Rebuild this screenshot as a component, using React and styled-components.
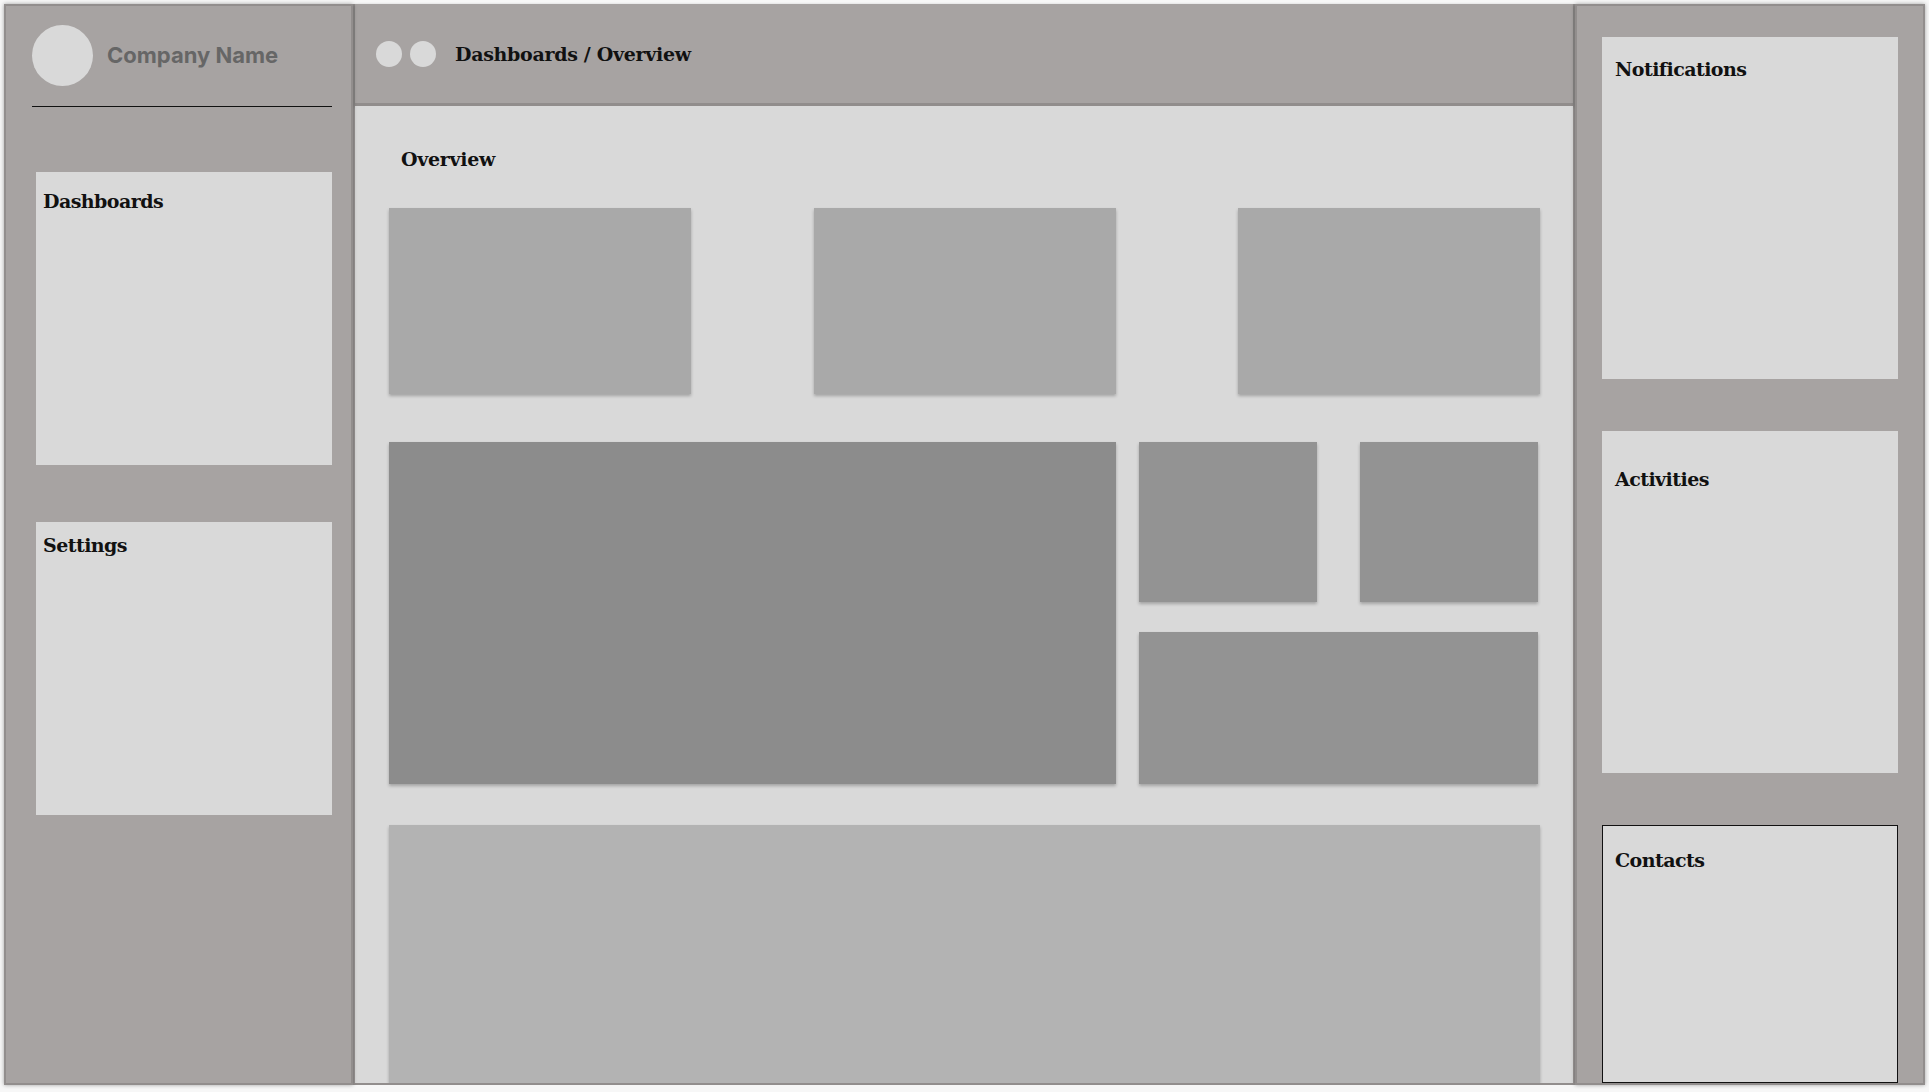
import React from 'react';
import styled, { createGlobalStyle } from 'styled-components';

// --- Global ---
const GlobalStyle = createGlobalStyle`
  html, body {
    margin: 0;
    padding: 0;
    background: #f7f7f7;
  }
  * { box-sizing: border-box; }
`;

const serif = `'DejaVu Serif', 'Liberation Serif', serif`;

// --- Layout ---
const Frame = styled.div`
  margin: 4px;
  height: 1081px;
  width: 1921px;
  display: grid;
  grid-template-columns: 349px 1fr 350px;
`;

const SidePanel = styled.aside`
  background: #a7a3a2;
  border: 2px solid #928e8d;
  box-shadow: 0 0 4px rgba(0, 0, 0, 0.35);
  display: flex;
  flex-direction: column;
  padding: ${p => p.$padding};
  position: relative;
  z-index: 1;
`;

const Center = styled.div`
  display: flex;
  flex-direction: column;
  min-width: 0;
  border-left: 2px solid #9a9695;
  border-right: 2px solid #9a9695;
  border-bottom: 2px solid #928e8d;
`;

// --- Left sidebar ---
const Brand = styled.div`
  display: flex;
  align-items: center;
  gap: 14px;
`;

const Avatar = styled.div`
  width: 61px;
  height: 61px;
  border-radius: 50%;
  background: #d9d9d9;
  flex-shrink: 0;
`;

const CompanyName = styled.span`
  font-family: Inter, 'Liberation Sans', Arial, sans-serif;
  font-weight: 700;
  font-size: 22px;
  color: #666;
  margin-top: -1px;
`;

const Divider = styled.hr`
  border: none;
  border-top: 1px solid #111;
  margin: 20px 0 0;
  width: 300px;
`;

// --- Cards in the side panels ---
const NavCard = styled.section`
  background: #d9d9d9;
  height: ${p => p.$height}px;
  margin-top: ${p => p.$gap}px;
  margin-left: ${p => p.$indent || 0}px;
  padding: ${p => p.$padTop}px ${p => p.$padLeft}px 0;
  border: ${p => (p.$outlined ? '1px solid #111' : 'none')};
  flex-shrink: 0;
`;

const CardTitle = styled.h3`
  margin: 0;
  font-family: ${serif};
  font-weight: 700;
  font-size: 19px;
  letter-spacing: -0.55px;
  line-height: 22px;
  color: #111;
`;

// --- Header ---
const TopBar = styled.header`
  height: 102px;
  background: #a7a3a2;
  border-bottom: 3px solid #918d8c;
  box-shadow: 0 1px 3px rgba(0, 0, 0, 0.3);
  display: flex;
  align-items: center;
  padding-left: 21px;
  gap: 8px;
  flex-shrink: 0;
`;

const Dot = styled.span`
  width: 26px;
  height: 26px;
  border-radius: 50%;
  background: #d9d9d9;
`;

const Crumbs = styled.span`
  font-family: ${serif};
  font-weight: 700;
  font-size: 19px;
  letter-spacing: -0.3px;
  color: #111;
  margin-left: 11px;
`;

// --- Main content ---
const Main = styled.main`
  flex: 1;
  background: #d9d9d9;
  padding: 42px 33px 0 34px;
  overflow: hidden;
`;

const PageTitle = styled.h2`
  margin: 0 0 38px 12px;
  font-family: ${serif};
  font-weight: 700;
  font-size: 19px;
  letter-spacing: -0.3px;
  line-height: 22px;
  color: #111;
`;

const StatRow = styled.div`
  display: flex;
  justify-content: space-between;
`;

const Tile = styled.div`
  background: ${p => p.$tone};
  height: ${p => p.$height}px;
  width: ${p => (p.$width ? `${p.$width}px` : 'auto')};
  box-shadow: 0 2px 3px rgba(0, 0, 0, 0.25);
`;

const ChartRow = styled.div`
  display: grid;
  grid-template-columns: 727px 399px;
  column-gap: 23px;
  margin-top: 48px;
`;

const SideStack = styled.div`
  display: flex;
  flex-direction: column;
  gap: 30px;
`;

const Pair = styled.div`
  display: flex;
  justify-content: space-between;
`;

const WideRow = styled.div`
  margin-top: 41px;
`;

export default function App() {
  return (
    <>
      <GlobalStyle />
      <Frame>
        <SidePanel $padding="19px 19px 0 26px">
          <Brand>
            <Avatar />
            <CompanyName>Company Name</CompanyName>
          </Brand>
          <Divider />
          <NavCard $height={293} $gap={65} $indent={4} $padTop={18} $padLeft={7}>
            <CardTitle>Dashboards</CardTitle>
          </NavCard>
          <NavCard $height={293} $gap={57} $indent={4} $padTop={12} $padLeft={7}>
            <CardTitle>Settings</CardTitle>
          </NavCard>
        </SidePanel>

        <Center>
          <TopBar>
            <Dot />
            <Dot />
            <Crumbs>Dashboards / Overview</Crumbs>
          </TopBar>
          <Main>
            <PageTitle>Overview</PageTitle>
            <StatRow>
              <Tile $tone="#a9a9a9" $height={186} $width={302} />
              <Tile $tone="#a9a9a9" $height={186} $width={302} />
              <Tile $tone="#a9a9a9" $height={186} $width={302} />
            </StatRow>
            <ChartRow>
              <Tile $tone="#8c8c8c" $height={342} />
              <SideStack>
                <Pair>
                  <Tile $tone="#939393" $height={160} $width={178} />
                  <Tile $tone="#939393" $height={160} $width={178} />
                </Pair>
                <Tile $tone="#939393" $height={152} />
              </SideStack>
            </ChartRow>
            <WideRow>
              <Tile $tone="#b3b3b3" $height={258} />
            </WideRow>
          </Main>
        </Center>

        <SidePanel $padding="31px 25px 0 25px">
          <NavCard $height={342} $gap={0} $padTop={21} $padLeft={13}>
            <CardTitle>Notifications</CardTitle>
          </NavCard>
          <NavCard $height={342} $gap={52} $padTop={37} $padLeft={13}>
            <CardTitle>Activities</CardTitle>
          </NavCard>
          <NavCard $height={258} $gap={52} $padTop={23} $padLeft={12} $outlined>
            <CardTitle>Contacts</CardTitle>
          </NavCard>
        </SidePanel>
      </Frame>
    </>
  );
}
